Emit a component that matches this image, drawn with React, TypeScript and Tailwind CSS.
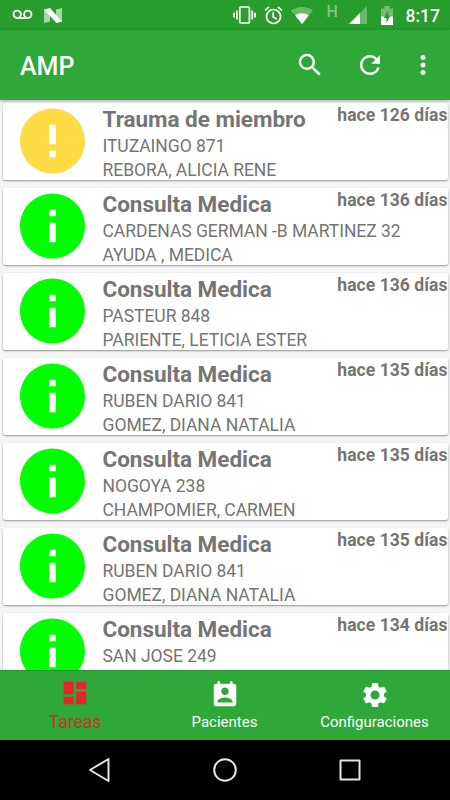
import { MdDashboard, MdError, MdInfo, MdMoreVert, MdPermContactCalendar, MdRefresh, MdSearch, MdSettings } from 'react-icons/md';

type Task = {
    id: number;
    title: string;
    address: string;
    patient?: string;
    age: string;
    isUrgent?: boolean;
};

const TASKS: Task[] = [
    { id: 1, title: 'Trauma de miembro', address: 'ITUZAINGO 871', patient: 'REBORA, ALICIA RENE', age: 'hace 126 días', isUrgent: true },
    { id: 2, title: 'Consulta Medica', address: 'CARDENAS GERMAN -B MARTINEZ 32', patient: 'AYUDA , MEDICA', age: 'hace 136 días' },
    { id: 3, title: 'Consulta Medica', address: 'PASTEUR 848', patient: 'PARIENTE, LETICIA ESTER', age: 'hace 136 días' },
    { id: 4, title: 'Consulta Medica', address: 'RUBEN DARIO 841', patient: 'GOMEZ, DIANA NATALIA', age: 'hace 135 días' },
    { id: 5, title: 'Consulta Medica', address: 'NOGOYA 238', patient: 'CHAMPOMIER, CARMEN', age: 'hace 135 días' },
    { id: 6, title: 'Consulta Medica', address: 'RUBEN DARIO 841', patient: 'GOMEZ, DIANA NATALIA', age: 'hace 135 días' },
    { id: 7, title: 'Consulta Medica', address: 'SAN JOSE 249', age: 'hace 134 días' },
];

function StatusBar() {
    return (
        <div className="h-[30px] shrink-0 bg-[#289c2c] text-white flex items-center justify-between pl-3 pr-[10px]">
            <div className="flex items-center gap-[11px]">
                <svg className="w-[21px] h-[12px]" viewBox="0 0 21 12" fill="none" stroke="currentColor" strokeWidth="1.8">
                    <circle cx="5.2" cy="5.3" r="3.7" />
                    <circle cx="15.8" cy="5.3" r="3.7" />
                    <path d="M5.2 9h10.6" />
                </svg>
                <svg className="w-[18px] h-[15px]" viewBox="0 0 18 15" fill="currentColor">
                    <path d="M0 1.5 6 4v9.5L0 15zM12 1.5 18 0v13.5l-6-3z" opacity=".6" />
                    <path d="M0 1.5 6 0l12 13.5-5.5 1.5z" />
                </svg>
            </div>
            <div className="flex items-center">
                <svg className="w-[23px] h-[18px]" viewBox="0 0 23 18" fill="none" stroke="currentColor" strokeWidth="1.7">
                    <rect x="6.8" y="1" width="9.6" height="16" rx="1" />
                    <path d="M3.9 4.5v9M1 6.8v4.8M19.2 4.5v9M22 6.8v4.8" />
                </svg>
                <svg className="w-[19px] h-[19px] ml-[8px]" viewBox="0 0 19 19" fill="none" stroke="currentColor" strokeWidth="1.7">
                    <circle cx="9.5" cy="10.5" r="7" />
                    <path d="M9.2 6.2v4.9l3.4 2M1 4.3l4-3.3M18 4.3l-4-3.3" />
                </svg>
                <svg className="w-[22px] h-[17px] ml-[8px]" viewBox="0 0 22 17" fill="currentColor">
                    <path d="M0 3.6C6-1.2 16-1.2 22 3.6L11 17z" opacity=".3" />
                    <path d="M4.2 8.5c4-3.1 9.6-3.1 13.6 0L11 17z" />
                </svg>
                <span className="w-[12px] ml-[14px] mr-[-1px] mb-[7px] text-[16px] leading-[14px] font-medium opacity-40">H</span>
                <svg className="w-[18px] h-[18px] ml-[11px]" viewBox="0 0 18 18" fill="currentColor">
                    <path d="M18 0v18H0z" opacity=".3" />
                    <path d="M11 7v11H0z" />
                </svg>
                <svg className="w-[12px] h-[19px] ml-[14px]" viewBox="0 0 12 19" fill="currentColor">
                    <path d="M0 2.5h3.5V0h5v2.5H12V19H0z" opacity=".35" />
                    <path d="M0 10.5h12V19H0z" />
                    <path d="M7.2 4.5 2.8 12H5.5v5L9.5 9.5H7.2z" fill="#289c2c" />
                </svg>
                <span className="ml-[13px] mt-px text-[17.5px] leading-[30px] font-medium">8:17</span>
            </div>
        </div>
    );
}

function AppBar() {
    return (
        <header className="h-[70px] shrink-0 bg-[#2ea838] text-white flex items-center justify-between pl-5 pr-3 z-10 shadow-[0_1px_3px_rgba(0,0,0,0.35)]">
            <h1 className="pt-[3px] text-[25px] leading-[30px] font-medium">AMP</h1>
            <div className="flex items-center">
                <MdSearch size={30} />
                <MdRefresh size={30} className="ml-[30px]" />
                <MdMoreVert size={30} className="ml-[23px]" />
            </div>
        </header>
    );
}

function TaskCard({ task }: { task: Task }) {
    return (
        <article className="h-[77.5px] shrink-0 bg-white rounded-[2.5px] flex items-start pl-[10.5px] shadow-[0_1px_2px_rgba(0,0,0,0.4)]">
            {task.isUrgent ? (
                <MdError size={78} className="shrink-0 -mt-[0.7px] translate-x-[0.5px] text-[#ffdc45]" />
            ) : (
                <MdInfo size={78} className="shrink-0 -mt-[0.7px] translate-x-[0.5px] text-[#00ff00]" />
            )}
            <div className="flex-1 ml-[11.5px] pt-[3px] whitespace-nowrap">
                <h2 className="text-[22.5px] leading-[27px] font-bold tracking-[-0.03px]">{task.title}</h2>
                <div className="pt-px text-[17.5px] leading-[24px] tracking-[-0.04px]">
                    <p>{task.address}</p>
                    {task.patient && <p>{task.patient}</p>}
                </div>
            </div>
            <span className="w-0 flex justify-end whitespace-nowrap text-[17.5px] leading-[24px] font-bold tracking-[0.05px]">
                {task.age}
            </span>
        </article>
    );
}

function BottomNav() {
    return (
        <nav className="h-[70px] shrink-0 bg-[#2ea838] text-white grid grid-cols-3 border-t border-[#259030] z-10">
            <div className="flex flex-col items-center pt-[7px] text-[#e8232b]">
                <MdDashboard size={30} />
                <span className="mt-[4px] text-[17.5px] leading-[20px] text-[#b93a2b]">Tareas</span>
            </div>
            <div className="flex flex-col items-center pt-[9px]">
                <MdPermContactCalendar size={30} />
                <span className="mt-[3px] pr-px text-[15px] leading-[18px]">Pacientes</span>
            </div>
            <div className="flex flex-col items-center pt-[9px]">
                <MdSettings size={30} />
                <span className="mt-[3px] pr-px text-[15px] leading-[18px]">Configuraciones</span>
            </div>
        </nav>
    );
}

function SystemNav() {
    return (
        <div className="h-[60px] shrink-0 bg-black text-[#e4e4e4] flex items-center justify-center gap-[99px]">
            <svg className="w-[26px] h-[26px]" viewBox="0 0 26 26" fill="none" stroke="currentColor" strokeWidth="2" strokeLinejoin="round">
                <path d="M21.5 2v22L3 13z" />
            </svg>
            <svg className="w-[26px] h-[26px]" viewBox="0 0 26 26" fill="none" stroke="currentColor" strokeWidth="2">
                <circle cx="13" cy="13" r="10.8" />
            </svg>
            <svg className="w-[26px] h-[26px]" viewBox="0 0 26 26" fill="none" stroke="currentColor" strokeWidth="2" strokeLinejoin="round">
                <path d="M3.5 3.5h19v19h-19z" />
            </svg>
        </div>
    );
}

function App() {
    return (
        <div className="w-[450px] h-[800px] flex flex-col overflow-hidden bg-[#f5f5f5] font-['Roboto',sans-serif]">
            <StatusBar />
            <AppBar />
            <main className="flex-1 min-h-0 overflow-hidden flex flex-col gap-[7.5px] pt-[2.5px] px-[2.5px] text-[#757575]">
                {TASKS.map((task) => (
                    <TaskCard key={task.id} task={task} />
                ))}
            </main>
            <BottomNav />
            <SystemNav />
        </div>
    );
}

export default App;
